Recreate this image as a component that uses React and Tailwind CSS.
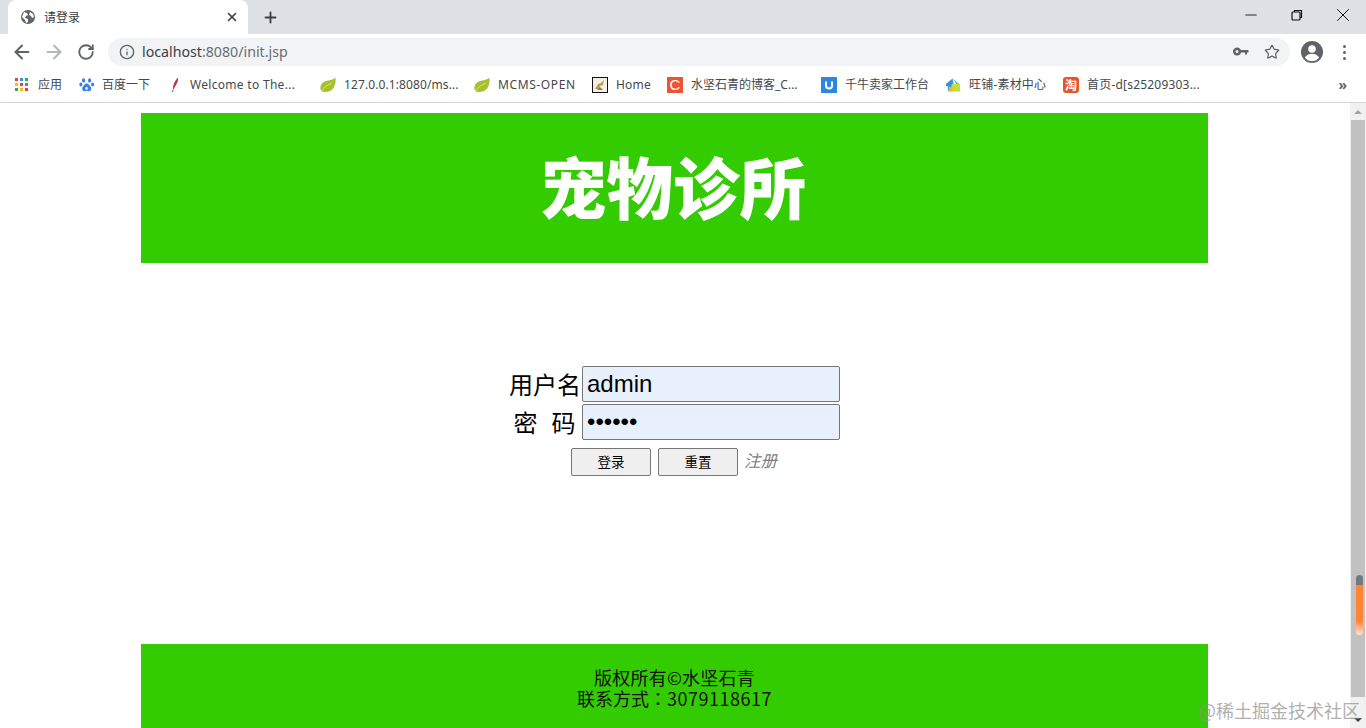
import React from 'react';
import { ArrowLeft, ArrowRight, RotateCw, Info, Star, Plus, X, Minus } from 'lucide-react';

const uiFont = 'font-["Noto_Sans","Noto_Sans_CJK_SC",sans-serif]';

function AppsIcon() {
    const colors = ['#ea4335', '#4285f4', '#34a853', '#fbbc05', '#ea4335', '#4285f4', '#34a853', '#fbbc05', '#ea4335'];
    return (
        <div className="grid grid-cols-3 gap-[2px] w-[13px] h-[13px]">
            {colors.map((c, i) => (
                <div key={i} className="w-[3px] h-[3px]" style={{ backgroundColor: c }} />
            ))}
        </div>
    );
}

function PawIcon() {
    return (
        <svg width="16" height="16" viewBox="0 0 16 16">
            <g fill="#3b7fe0">
                <ellipse cx="4.600" cy="3.400" rx="1.600" ry="2.200" />
                <ellipse cx="10.600" cy="3.400" rx="1.600" ry="2.200" />
                <ellipse cx="1.900" cy="7.400" rx="1.500" ry="2" />
                <ellipse cx="13.600" cy="7.400" rx="1.500" ry="2" />
                <path d="M7.600 6.600c-2 0-2.400 2-3.600 3-1.200 1-1.400 4.600 1.600 4.600 1 0 1.400-.4 2-.4s1.200.4 2.200.4c3 0 2.800-3.600 1.600-4.600-1.200-1-1.800-3-3.800-3z" />
            </g>
            <circle cx="7.600" cy="11.200" r="1.500" fill="#cfe0fa" />
        </svg>
    );
}

function FeatherIcon() {
    return (
        <svg width="16" height="16" viewBox="0 0 16 16">
            <path d="M11 0.500c.6 2.500-1 6.500-3.500 10L6 13c-.6-2.500 1-8.500 5-12.500z" fill="#c4304e" />
            <path d="M6 13l-.6 2" stroke="#7a5a7a" strokeWidth="1" />
        </svg>
    );
}

function LeafIcon() {
    return (
        <svg width="17" height="16" viewBox="0 0 17 16">
            <path d="M16.500 0C15 2 11.500 2.500 7.500 3.500 2.500 4.800 0 8 .5 12c.2 1.500 1 3 2.800 3.300 3.500.6 8.200-.3 10.700-3.600C16 9 17 4.500 16.500 0z" fill="#a8bf2e" />
            <path d="M1.500 14.500c3-4.500 6.500-6.500 11-8.500" stroke="#dbe685" strokeWidth="1" fill="none" />
        </svg>
    );
}

function HomeIcon() {
    return (
        <svg width="16" height="16" viewBox="0 0 16 16">
            <rect x="0.500" y="0.500" width="15" height="15" fill="#f3efe6" stroke="#111" />
            <path d="M3 12l3-5 3-1 3-3-1 5-3 1-1 3z" fill="#c09a55" />
            <path d="M5 13l3-3 3 3z" fill="#8f7a55" />
        </svg>
    );
}

function CsdnIcon() {
    return (
        <div className="w-4 h-4 bg-[#ea5635] text-white flex items-center justify-center font-['Liberation_Sans',sans-serif] text-[15px] leading-none">
            C
        </div>
    );
}

function QianniuIcon() {
    return (
        <div className="w-4 h-4 bg-[#2b87e3] flex items-center justify-center">
            <svg width="10" height="10" viewBox="0 0 10 10">
                <path d="M2 1.500v4a3 3 0 0 0 6 0v-4" fill="none" stroke="#fff" strokeWidth="2" />
            </svg>
        </div>
    );
}

function WangpuIcon() {
    return (
        <svg width="17" height="16" viewBox="0 0 17 16">
            <path d="M8 1L1 7v2h2v5h6V7z" fill="#3d8fe0" />
            <path d="M8 1l7 6-2 1z" fill="#3fb6c9" />
            <rect x="7" y="7" width="9" height="8" fill="#c6de3a" />
            <rect x="4" y="10" width="4" height="5" fill="#f0b23c" />
        </svg>
    );
}

function TaobaoIcon() {
    return (
        <div className="w-4 h-4 rounded-[3px] bg-[#e2572b] text-white flex items-center justify-center font-['Noto_Sans_CJK_SC',sans-serif] font-bold text-[12px] leading-none">
            淘
        </div>
    );
}

const bookmarks = [
    { w: 'w-[64px]', gap: 'gap-[7px]', track: '', icon: <AppsIcon />, text: '应用' },
    { w: 'w-[88px]', gap: 'gap-[7px]', track: '', icon: <PawIcon />, text: '百度一下' },
    { w: 'w-[153px]', gap: 'gap-[7px]', track: 'tracking-[0.3px]', icon: <FeatherIcon />, text: 'Welcome to The...' },
    { w: 'w-[154px]', gap: 'gap-[8px]', track: 'tracking-[0.1px]', icon: <LeafIcon />, text: '127.0.0.1:8080/ms...' },
    { w: 'w-[118px]', gap: 'gap-[8px]', track: 'tracking-[0.6px]', icon: <LeafIcon />, text: 'MCMS-OPEN' },
    { w: 'w-[75px]', gap: 'gap-[8px]', track: 'tracking-[0.2px]', icon: <HomeIcon />, text: 'Home' },
    { w: 'w-[154px]', gap: 'gap-[8px]', track: '', icon: <CsdnIcon />, text: '水坚石青的博客_C...' },
    { w: 'w-[124px]', gap: 'gap-[8px]', track: '', icon: <QianniuIcon />, text: '千牛卖家工作台' },
    { w: 'w-[118px]', gap: 'gap-[8px]', track: 'tracking-[0.2px]', icon: <WangpuIcon />, text: '旺铺-素材中心' },
    { w: 'w-[200px]', gap: 'gap-[8px]', track: 'tracking-[0.2px]', icon: <TaobaoIcon />, text: '首页-d[s25209303...' },
];

function TabStrip() {
    return (
        <div className="h-[34px] bg-[#dee1e6] flex pl-[8px] shrink-0">
            <div className="w-[240px] h-[34px] bg-white rounded-t-[8px] flex items-center pl-[12px] pr-[9px]">
                <svg width="16" height="16" viewBox="0 0 16 16">
                    <circle cx="8" cy="8" r="7" fill="#5f6368" />
                    <path d="M4 3l3 1 1 2-2 1-1 2 3 1 0 3-2 1-1-3-3-3zM10 3l3 2 1 3-2 1-1-2-2-1z" fill="#fff" />
                </svg>
                <span className={`ml-[8px] pt-[1px] text-[12px] text-[#3c4043] ${uiFont}`}>请登录</span>
                <X size={14} strokeWidth={2.8} className="ml-auto text-[#3c4043]" />
            </div>
            <div className="h-[34px] flex items-center ml-[14px]">
                <Plus size={17} strokeWidth={2.6} className="text-[#3c4043]" />
            </div>
            <div className="ml-auto flex items-start">
                <div className="w-[46px] h-[29px] flex items-center justify-center">
                    <Minus size={18} strokeWidth={1.1} className="text-black" />
                </div>
                <div className="w-[46px] h-[29px] flex items-center justify-center">
                    <svg width="12" height="12" viewBox="0 0 12 12" fill="none" stroke="#111" strokeWidth="1.200">
                        <rect x="1" y="3" width="8" height="8" rx="1" />
                        <path d="M3.500 3V1.500h7v7H9" />
                    </svg>
                </div>
                <div className="w-[46px] h-[29px] flex items-center justify-center">
                    <X size={22} strokeWidth={1} className="text-black" />
                </div>
            </div>
        </div>
    );
}

function Toolbar() {
    return (
        <div className="h-[33px] bg-white flex items-center pt-[3px] shrink-0">
            <ArrowLeft size={22} strokeWidth={2.2} className="ml-[11px] text-[#5f6368]" />
            <ArrowRight size={22} strokeWidth={2.2} className="ml-[10px] text-[#b4b7bb]" />
            <RotateCw size={18} strokeWidth={2.4} className="ml-[12px] text-[#5f6368]" />
            <div className="ml-[13px] w-[1182px] h-[28px] rounded-full bg-[#f1f3f4] flex items-center pl-[11px] pr-[10px]">
                <Info size={16} strokeWidth={2} className="text-[#5f6368]" />
                <span className="ml-[7px] text-[14.200px] leading-none font-['Noto_Sans',sans-serif] text-[#6b6e72]">
                    <span className="text-[#3c4043]">localhost</span>:8080/init.jsp
                </span>
                <svg className="ml-auto" width="16" height="10" viewBox="0 0 16 10" fill="#5f6368">
                    <path d="M4 0.500a4 4 0 1 1-3.800 5.200A4 4 0 0 1 4 .5zm0 2.500a1.500 1.500 0 1 0 0 3 1.500 1.500 0 0 0 0-3zM7.500 3h8v2.600h-1.500v2h-2v-2H7.500z" />
                </svg>
                <Star size={16} strokeWidth={1.8} className="ml-[15px] text-[#5f6368]" />
            </div>
            <svg className="ml-[11px]" width="22" height="22" viewBox="0 0 22 22">
                <circle cx="11" cy="11" r="11" fill="#5f6368" />
                <circle cx="11" cy="8" r="3.800" fill="#fff" />
                <path d="M3.800 16.500c2-3 4.500-3.800 7.200-3.800s5.200.8 7.200 3.800c-1.600 2.300-4.200 3.700-7.200 3.700s-5.600-1.400-7.200-3.700z" fill="#fff" />
            </svg>
            <div className="ml-[20px] flex flex-col gap-[3px]">
                <div className="w-[3px] h-[3px] rounded-full bg-[#5f6368]" />
                <div className="w-[3px] h-[3px] rounded-full bg-[#5f6368]" />
                <div className="w-[3px] h-[3px] rounded-full bg-[#5f6368]" />
            </div>
        </div>
    );
}

function BookmarkBar() {
    return (
        <div className={`h-[36px] bg-white border-b border-[#d2d4d7] flex items-center pl-[15px] shrink-0 ${uiFont}`}>
            {bookmarks.map((b) => (
                <div key={b.text} className={`${b.w} ${b.gap} flex items-center shrink-0`}>
                    <div className="w-[16px] h-[16px] flex items-center shrink-0">{b.icon}</div>
                    <span className={`${b.track} text-[12px] text-[#45484b] whitespace-nowrap`}>{b.text}</span>
                </div>
            ))}
            <span className="ml-auto mr-[19px] text-[14px] font-bold leading-none text-[#5f6368]">»</span>
        </div>
    );
}

function Scrollbar() {
    return (
        <div className="w-[16px] bg-[#f1f1f1] flex flex-col items-center shrink-0 relative">
            <div className="h-[17px] flex items-center justify-center">
                <div className="w-0 h-0 border-x-[4px] border-x-transparent border-b-[4px] border-b-[#a3a3a3]" />
            </div>
            <div className="w-[14px] h-[577px] bg-[#c1c1c1]" />
            <div className="mt-auto h-[17px] flex items-center justify-center">
                <div className="w-0 h-0 border-x-[4px] border-x-transparent border-t-[4px] border-t-[#404040]" />
            </div>
            <div className="absolute left-[6px] top-[472px] w-[7px] h-[60px] rounded-full overflow-hidden flex flex-col">
                <div className="h-[10px] bg-[#6f7a85]" />
                <div className="h-[36px] bg-[#ff8533]" />
                <div className="h-[14px] bg-gradient-to-b from-[#ff8533] to-[#fbe3cc]" />
            </div>
        </div>
    );
}

function LoginForm() {
    const inputCls =
        "w-[258px] h-[36px] bg-[#e8f0fe] border border-[#767676] rounded-[2px] px-[4px] text-[24px] text-black font-['Liberation_Sans',sans-serif] outline-none";
    const labelCls = "w-[74px] pr-[1px] text-right text-[24px] text-black whitespace-nowrap font-['Noto_Sans_CJK_SC',sans-serif]";
    const btnCls =
        "w-[80px] h-[28px] pb-[1px] bg-[#efefef] border border-[#767676] rounded-[2px] text-[13.500px] text-black font-['Noto_Sans_CJK_SC',sans-serif]";
    return (
        <div className="mt-[103px] flex flex-col items-center h-[278px]">
            <div className="flex items-center h-[36px] mr-[1px]">
                <label className={labelCls}>用户名</label>
                <input className={inputCls} defaultValue="admin" />
            </div>
            <div className="flex items-center h-[36px] mt-[2px] mr-[1px]">
                <label className={labelCls}>
                    密<span className="inline-block w-[14px]" />码&nbsp;
                </label>
                <input className={inputCls} type="password" defaultValue="123456" />
            </div>
            <div className="flex items-center gap-[7px] mt-[8px]">
                <button className={btnCls}>登录</button>
                <button className={btnCls}>重置</button>
                <a className="text-[16.500px] italic text-[#808080] -translate-x-px -translate-y-[2px] font-['Noto_Sans_CJK_SC',sans-serif]">注册</a>
            </div>
        </div>
    );
}

export default function App() {
    return (
        <div className="relative w-[1366px] h-[728px] overflow-hidden bg-white flex flex-col">
            <TabStrip />
            <Toolbar />
            <BookmarkBar />
            <div className="flex flex-1 min-h-0">
                <div className="flex-1 min-w-0 pt-[10px]">
                    <div className="ml-[141px] w-[1067px]">
                        <div className="h-[150px] pb-[5px] pr-[3px] bg-[#33cc00] flex items-center justify-center">
                            <h1 className="text-[66.500px] font-black text-white font-['Noto_Sans_CJK_SC',sans-serif] leading-none">宠物诊所</h1>
                        </div>
                        <LoginForm />
                        <div className="h-[84px] bg-[#33cc00] pt-[23px] text-center text-[18px] leading-[21px] text-[#111] font-['Noto_Sans_CJK_SC',sans-serif]">
                            <p className="tracking-[0.2px]">版权所有©水坚石青</p>
                            <p>
                                联系方式<span className="font-['Noto_Sans_CJK_TC',sans-serif]">：</span>
                                <span className="tracking-[0.5px]">3079118617</span>
                            </p>
                        </div>
                    </div>
                </div>
                <Scrollbar />
            </div>
            {/* watermark sits on top of everything */}
            <div className="absolute right-[6px] bottom-[9px] text-[18px] leading-none text-[#8f8f8f] opacity-70 font-['Noto_Sans_CJK_SC',sans-serif]">
                <span className="text-[19px]">@</span>稀土掘金技术社区
            </div>
        </div>
    );
}
